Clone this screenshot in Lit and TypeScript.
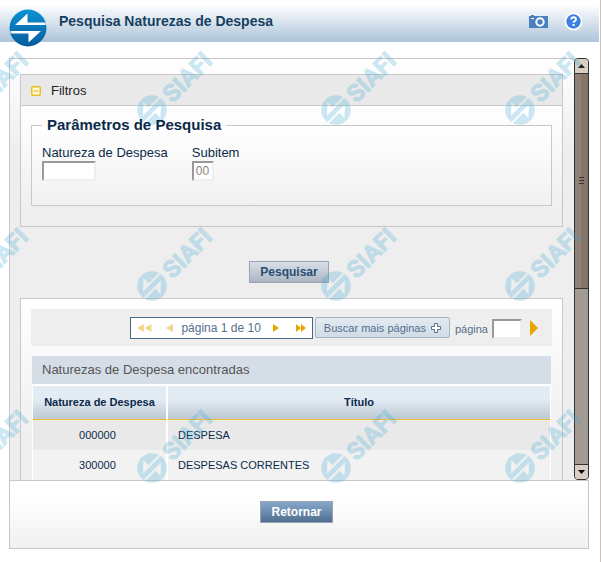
import { LitElement, html, css } from "lit";
import { customElement, state } from "lit/decorators.js";

interface Natureza {
  codigo: string;
  titulo: string;
}

const emblem =
  "M0-18.5A18.5 18.5 0 1 1 0 18.5A18.5 18.5 0 1 1 0-18.5Z" +
  "M-.5-14.5L-13-3H18L17.5-5.5H-.5Z" +
  "M.5 14.5L13 3H-18L-17.5 5.5H.5Z";

@customElement("siafi-mark")
export class SiafiMark extends LitElement {
  static styles = css`
    :host {
      display: block;
      width: 80px;
      height: 78px;
    }
    svg {
      display: block;
      overflow: visible;
      opacity: 0.25;
    }
    .shape {
      fill: #37a7d3;
      fill-rule: evenodd;
    }
    .word {
      fill: #37a7d3;
      stroke: #37a7d3;
      stroke-width: 1px;
      stroke-linejoin: round;
      font: bold 24px Roboto, "Liberation Sans", sans-serif;
    }
  `;

  render() {
    return html`<svg width="80" height="78" viewBox="-16 -62 80 78" aria-hidden="true">
      <g transform="rotate(-45)">
        <g transform="scale(0.8)"><path class="shape" d=${emblem}></path></g>
        <text class="word" x="19" y="10">SIAFI</text>
      </g>
    </svg>`;
  }
}

@customElement("app-root")
export class AppRoot extends LitElement {
  @state() private page = 1;
  @state() private pages = 10;
  @state() private open = true;

  private rows: Natureza[] = [
    { codigo: "000000", titulo: "DESPESA" },
    { codigo: "300000", titulo: "DESPESAS CORRENTES" },
  ];

  static styles = css`
    :host {
      display: flex;
      flex-direction: column;
      position: relative;
      box-sizing: border-box;
      height: 100vh;
      overflow: hidden;
      border-right: 1px solid #c8c4bc;
      background: #fff;
      color: #0b2a4a;
      font: 13px/16px "Liberation Sans", Arial, sans-serif;
    }
    * {
      box-sizing: border-box;
    }
    button {
      margin: 0;
      padding: 0;
      border: 0;
      background: none;
      font: inherit;
      color: inherit;
      cursor: pointer;
    }
    svg {
      display: block;
    }

    .topbar {
      display: flex;
      align-items: center;
      height: 42px;
      flex: none;
      margin-right: 1px;
      padding: 0 16px 0 9px;
      background: linear-gradient(#fff 10%, #dfe8f0 45%, #adc4da);
    }
    .logo {
      align-self: flex-start;
      margin-top: 9px;
    }
    .title {
      flex: 1;
      margin: 0 0 0 12px;
      font-size: 14px;
      font-weight: bold;
      color: #173f62;
    }
    .tools {
      display: flex;
      align-items: center;
      gap: 16px;
    }

    .body {
      display: flex;
      flex: 1;
      min-height: 0;
      margin: 16px 11px 0 9px;
    }
    .pane {
      flex: 1;
      min-width: 0;
      overflow: hidden;
      padding: 15px 11px 0 10px;
      border: 1px solid #c8c8c8;
      border-width: 1px 0 0 1px;
      background: #eee linear-gradient(#fff, #eee) 0 0 / 100% 90px no-repeat;
    }

    .scroll {
      display: flex;
      flex-direction: column;
      width: 15px;
      border: 1px solid #333;
      border-radius: 4px;
      background: #a29c95;
      overflow: hidden;
    }
    .step {
      display: grid;
      place-items: center;
      height: 14px;
      flex: none;
      background: #d8cec5;
    }
    .thumb {
      display: flex;
      flex-direction: column;
      align-items: center;
      justify-content: center;
      gap: 2px;
      flex: 55;
      border: 1px solid #333;
      border-width: 1px 0;
      background: linear-gradient(90deg, #928177 50%, #85746a 50%);
    }
    .thumb i {
      width: 5px;
      height: 1px;
      background: #333;
    }
    .rest {
      flex: 45;
      border-bottom: 1px solid #333;
    }

    .card {
      border: 1px solid #c8c8c8;
      background: #eee linear-gradient(#fff, #eee) 0 0 / 100% 150px no-repeat;
    }
    .card-head {
      display: flex;
      align-items: center;
      gap: 10px;
      width: 100%;
      height: 31px;
      padding: 2px 10px 0;
      border-bottom: 1px solid #c8c8c8;
      background: #e9e9e9;
      color: #222;
      text-align: left;
    }
    .card-body {
      padding: 9px 10px 20px;
      background: linear-gradient(#fff, #eee 90%);
    }
    fieldset {
      display: flex;
      gap: 24px;
      min-width: 0;
      height: 91px;
      margin: 0;
      padding: 10px 10px 0;
      border: 1px solid #c8c8c8;
      background: linear-gradient(#fff, #f1f1f1);
    }
    legend {
      position: relative;
      z-index: 2;
      padding: 0 5px;
      font-size: 15px;
      line-height: 20px;
      font-weight: bold;
    }
    .field {
      display: flex;
      flex-direction: column;
      align-items: flex-start;
    }
    .box {
      height: 20px;
      margin: 0;
      padding: 0 2px;
      border: 2px solid;
      border-color: #999 #eee #eee #999;
      border-radius: 0;
      background: #fff;
      color: #8a8580;
      font: 12px "Liberation Sans", Arial, sans-serif;
    }
    .w-code {
      width: 54px;
    }
    .w-sub {
      width: 22px;
    }
    .w-page {
      width: 30px;
    }

    .search {
      display: flex;
      justify-content: center;
      padding: 34px 5px 15px 0;
    }
    .btn {
      height: 22px;
      padding: 0 10px;
      border: 1px solid #9ba5b1;
      background: linear-gradient(#d9dfe9, #abb6c2);
      color: #2a4f73;
      font-size: 12px;
      font-weight: bold;
    }
    .dark {
      background: linear-gradient(#86a8ca, #4f7090);
      color: #fff;
    }

    .results {
      padding: 10px 10px 40px;
    }
    .pager {
      display: flex;
      align-items: center;
      justify-content: flex-end;
      height: 37px;
      padding-right: 14px;
      background: #eee;
      color: #55708d;
      font-size: 11px;
    }
    .nav {
      display: flex;
      align-items: center;
      height: 22px;
      margin-right: 2px;
      padding: 0 6px;
      border: 1px solid #456888;
      background: #fff;
      font-size: 12px;
    }
    .nav svg {
      fill: #e9a400;
    }
    .nav button:disabled {
      opacity: 0.45;
    }
    .count {
      padding: 0 12px 0 8px;
    }
    .next {
      margin-right: 17px;
    }
    .prev {
      margin-left: 14px;
    }
    .more {
      display: flex;
      align-items: center;
      gap: 5px;
      height: 21px;
      margin-right: 5px;
      padding: 0 8px;
      border: 1px solid #a5b5c4;
      border-radius: 2px;
      background: linear-gradient(#e2eaf1, #d0dce6);
    }
    .goto {
      display: flex;
      align-items: center;
      gap: 4px;
      padding-top: 2px;
    }
    .go {
      margin-left: 8px;
    }

    table {
      width: calc(100% - 2px);
      margin: 10px 1px 0;
      border-spacing: 0;
      table-layout: fixed;
      font-size: 11px;
    }
    caption {
      height: 30px;
      padding: 6px 10px;
      border-bottom: 2px solid #fff;
      background: #d5dee6;
      color: #555;
      font-size: 13px;
      text-align: left;
    }
    th,
    td {
      padding: 0 10px;
      border: 0 solid #fff;
      border-width: 0 1px;
    }
    th {
      height: 34px;
      padding-bottom: 2px;
      border-bottom: 1px solid #f0c030;
      background: linear-gradient(#e3ebf3 40%, #bdc9d3);
    }
    th:first-child {
      width: 26%;
      padding: 0 0 2px;
    }
    td {
      height: 30px;
      background: #e9e9e9;
    }
    td:first-child {
      padding-right: 14px;
      text-align: center;
    }
    tr:nth-child(even) td {
      background: #f2f2f2;
    }

    .footer {
      display: flex;
      flex: none;
      align-items: flex-start;
      justify-content: center;
      height: 69px;
      margin: 0 11px 13px 9px;
      padding: 20px 5px 0 0;
      border: 1px solid #c8c8c8;
      background: linear-gradient(#fff 20%, #f1f1f1);
    }

    .watermark {
      position: absolute;
      inset: 0;
      z-index: 1;
      display: grid;
      grid-template-rows: 176px 182px 78px;
      grid-template-columns: repeat(4, 184px);
      margin: 48px 0 0 -48px;
      pointer-events: none;
    }
  `;

  private go(page: number) {
    this.page = Math.min(this.pages, Math.max(1, page));
  }

  render() {
    return html`
      <header class="topbar">
        <svg class="logo" width="38" height="38" viewBox="-19 -19 38 38" aria-hidden="true">
          <defs>
            <linearGradient id="blue" x1="0" y1="0" x2="0" y2="1">
              <stop offset="0" stop-color="#0d92d2"></stop>
              <stop offset="1" stop-color="#075c9e"></stop>
            </linearGradient>
          </defs>
          <circle r="17" fill="#fff"></circle>
          <path d=${emblem} fill="url(#blue)" fill-rule="evenodd"></path>
        </svg>
        <h1 class="title">Pesquisa Naturezas de Despesa</h1>
        <div class="tools">
          <button aria-label="Capturar tela">
            <svg width="19" height="13" viewBox="0 0 19 13">
              <path d="M0 1h2V0h3v1h14v12H0z" fill="#4a80c0"></path>
              <path d="M2 3h3v1H2z" fill="#fff"></path>
              <circle cx="11" cy="7" r="3.7" fill="none" stroke="#fff" stroke-width="2"></circle>
            </svg>
          </button>
          <button aria-label="Ajuda">
            <svg width="19" height="19" viewBox="0 0 19 19">
              <circle cx="9.5" cy="9.5" r="9" fill="#fff"></circle>
              <circle cx="9.5" cy="9.5" r="7.2" fill="#3d7fe0"></circle>
              <path d="M7.2 7.6q0-2.3 2.4-2.3t2.4 2q0 1.2-1.3 1.8-1.1.5-1.1 1.6" fill="none" stroke="#fff" stroke-width="1.9"></path>
              <path d="M8.6 12h2v2h-2z" fill="#fff"></path>
            </svg>
          </button>
        </div>
      </header>

      <main class="body">
        <div class="pane">
          <section class="card">
            <button class="card-head" aria-expanded=${this.open} @click=${() => (this.open = !this.open)}>
              <svg width="10" height="10" viewBox="0 0 10 10">
                <rect x=".75" y=".75" width="8.5" height="8.5" rx="1" fill="#fff8d8" stroke="#e9bd20" stroke-width="1.5"></rect>
                <path d="M2.5 5h5" stroke="#e9bd20" stroke-width="1.2"></path>
              </svg>
              Filtros
            </button>
            ${this.open
              ? html`<div class="card-body">
                  <fieldset>
                    <legend>Parâmetros de Pesquisa</legend>
                    <div class="field">
                      <label for="natureza">Natureza de Despesa</label>
                      <input id="natureza" class="box w-code" type="text" />
                    </div>
                    <div class="field">
                      <label for="subitem">Subitem</label>
                      <input id="subitem" class="box w-sub" type="text" value="00" />
                    </div>
                  </fieldset>
                </div>`
              : ""}
          </section>

          <div class="search"><button class="btn">Pesquisar</button></div>

          <section class="card results">
            <div class="pager">
              <div class="nav">
                <button aria-label="Primeira" ?disabled=${this.page === 1} @click=${() => this.go(1)}>
                  <svg width="15" height="8" viewBox="0 0 15 8"><path d="M7 0v8L0 4zM14.5 0v8l-7-4z"></path></svg>
                </button>
                <button class="prev" aria-label="Anterior" ?disabled=${this.page === 1} @click=${() => this.go(this.page - 1)}>
                  <svg width="7" height="8" viewBox="0 0 7 8"><path d="M7 0v8L0 4z"></path></svg>
                </button>
                <span class="count">página ${this.page} de ${this.pages}</span>
                <button class="next" aria-label="Próxima" @click=${() => this.go(this.page + 1)}>
                  <svg width="6" height="8" viewBox="0 0 6 8"><path d="M0 0v8l6-4z"></path></svg>
                </button>
                <button aria-label="Última" @click=${() => this.go(this.pages)}>
                  <svg width="10" height="8" viewBox="0 0 10 8"><path d="M0 0v8l5-4zM5 0v8l5-4z"></path></svg>
                </button>
              </div>
              <button class="more">
                Buscar mais páginas
                <svg width="10" height="10" viewBox="0 0 10 10">
                  <path d="M3.5.5h3v3h3v3h-3v3h-3v-3h-3v-3h3z" fill="#fff" stroke="#55708d"></path>
                </svg>
              </button>
              <div class="goto">
                <label for="pagina">página</label>
                <input id="pagina" class="box w-page" type="text" />
              </div>
              <button class="go" aria-label="Ir para a página">
                <svg width="8" height="16" viewBox="0 0 8 16"><path d="M0 0l8 8-8 8z" fill="#e9a400"></path></svg>
              </button>
            </div>

            <table>
              <caption>Naturezas de Despesa encontradas</caption>
              <thead>
                <tr>
                  <th scope="col">Natureza de Despesa</th>
                  <th scope="col">Título</th>
                </tr>
              </thead>
              <tbody>
                ${this.rows.map((r) => html`<tr><td>${r.codigo}</td><td>${r.titulo}</td></tr>`)}
              </tbody>
            </table>
          </section>
        </div>

        <div class="scroll">
          <button class="step" aria-label="Rolar para cima">
            <svg width="7" height="4" viewBox="0 0 7 4"><path d="M0 4l3.5-4L7 4z" fill="#222"></path></svg>
          </button>
          <div class="thumb"><i></i><i></i><i></i></div>
          <div class="rest"></div>
          <button class="step" aria-label="Rolar para baixo">
            <svg width="7" height="4" viewBox="0 0 7 4"><path d="M0 0h7L3.5 4z" fill="#000"></path></svg>
          </button>
        </div>
      </main>

      <footer class="footer"><button class="btn dark">Retornar</button></footer>

      <div class="watermark" aria-hidden="true">
        ${Array.from({ length: 12 }, () => html`<siafi-mark></siafi-mark>`)}
      </div>
    `;
  }
}
